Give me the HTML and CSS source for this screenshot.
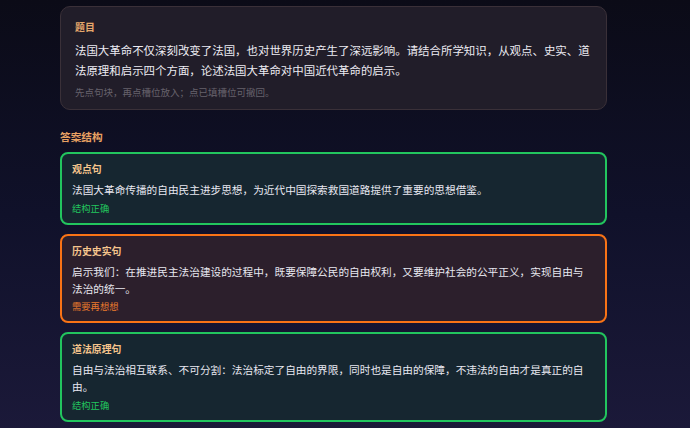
FILE: index.html
```html
<!DOCTYPE html>
<html lang="zh-CN">
<head>
<meta charset="utf-8">
<title>法国大革命的启示</title>
<link rel="stylesheet" href="styles.css">
</head>
<body>
<main class="page">
  <section class="question">
    <div class="q-label">题目</div>
    <p class="q-text">法国大革命不仅深刻改变了法国，也对世界历史产生了深远影响。请结合所学知识，从观点、史实、道法原理和启示四个方面，论述法国大革命对中国近代革命的启示。</p>
    <p class="q-hint">先点句块，再点槽位放入；点已填槽位可撤回。</p>
  </section>

  <h2 class="section-title">答案结构</h2>

  <div class="slots">
    <div class="slot slot-ok">
      <div class="slot-label">观点句</div>
      <p class="slot-text">法国大革命传播的自由民主进步思想，为近代中国探索救国道路提供了重要的思想借鉴。</p>
      <div class="slot-status">结构正确</div>
    </div>
    <div class="slot slot-warn">
      <div class="slot-label">历史史实句</div>
      <p class="slot-text">启示我们：在推进民主法治建设的过程中，既要保障公民的自由权利，又要维护社会的公平正义，实现自由与法治的统一。</p>
      <div class="slot-status">需要再想想</div>
    </div>
    <div class="slot slot-ok">
      <div class="slot-label">道法原理句</div>
      <p class="slot-text">自由与法治相互联系、不可分割：法治标定了自由的界限，同时也是自由的保障，不违法的自由才是真正的自由。</p>
      <div class="slot-status">结构正确</div>
    </div>
  </div>
</main>
</body>
</html>
```

FILE: styles.css
```css
* { box-sizing: border-box; }

html, body {
  margin: 0;
  padding: 0;
  height: 100%;
}

body {
  font-family: "Noto Sans CJK SC", "Noto Sans", "Liberation Sans", sans-serif;
  background: linear-gradient(to bottom, #0b0b17 0%, #10112a 50%, #1b1939 100%);
  color: #e6e6ee;
  overflow: hidden;
}

.page {
  width: 607px;
  padding: 6px 0 0 60px;
}

.question {
  background: #211d29;
  border: 1px solid #3a3038;
  border-radius: 10px;
  padding: 13px 14px 10px 14px;
}

.q-label {
  font-size: 9.9px;
  line-height: 14px;
  font-weight: 700;
  color: #e6a86c;
}

.q-text {
  margin: 6px 0 0;
  font-size: 11.44px;
  line-height: 20px;
  color: #ecebf2;
}

.q-hint {
  margin: 5px 0 0;
  font-size: 9.5px;
  line-height: 14px;
  color: #67626c;
}

.section-title {
  margin: 19px 0 7px;
  font-size: 10.67px;
  line-height: 16px;
  font-weight: 700;
  color: #e9a263;
}

.slots {
  display: flex;
  flex-direction: column;
  gap: 9px;
}

.slot {
  border: 2px solid;
  border-radius: 8px;
  padding: 8px 12px 8px 10px;
}

.slot-ok {
  background: #162630;
  border-color: #22c55e;
}

.slot-warn {
  background: #2c1f2c;
  border-color: #f97316;
}

.slot-label {
  font-size: 9.9px;
  line-height: 14px;
  font-weight: 700;
  color: #f4c48c;
}

.slot-text {
  margin: 5px 0 0;
  font-size: 10.67px;
  line-height: 17px;
  color: #e8e8f0;
}

.slot-status {
  margin-top: 2.5px;
  font-size: 9.3px;
  line-height: 14px;
}

.slot-ok .slot-status { color: #22c55e; }
.slot-warn .slot-status { color: #ea7a2c; }
```
